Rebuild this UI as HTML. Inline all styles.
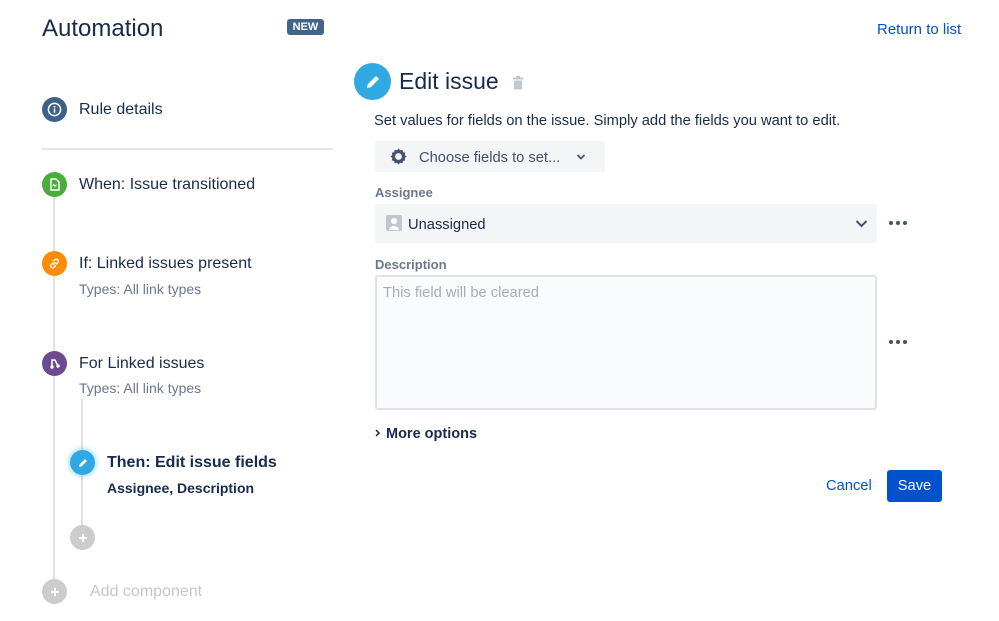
<!DOCTYPE html>
<html><head><meta charset="utf-8"><style>
*{margin:0;padding:0;box-sizing:border-box}
body{width:999px;height:621px;background:#fff;font-family:"Liberation Sans",Arial,sans-serif;color:#172B4D;position:relative;overflow:hidden}
.a{position:absolute;white-space:nowrap}
.c{position:absolute;border-radius:50%;display:flex;align-items:center;justify-content:center}
.vl{position:absolute;width:2px;background:#DFE1E6}
.g{color:#6B778C;font-size:14px}
.dots{position:absolute;display:flex;gap:3px}
.dots i{width:4px;height:4px;border-radius:50%;background:#42526E;display:block}
</style></head><body>
<div class="a" style="left:42px;top:15px;font-size:24px;">Automation</div>
<div class="a" style="left:287px;top:19px;width:37px;height:16px;background:#42648a;border-radius:3px;color:#fff;font-size:11px;font-weight:bold;text-align:center;line-height:16px">NEW</div>
<div class="a" style="left:877px;top:21px;font-size:15px;color:#0052CC">Return to list</div>

<div class="c" style="left:42px;top:97px;width:25px;height:25px;background:#3e6189"><svg width="15" height="15" viewBox="0 0 16 16"><circle cx="8" cy="8" r="6.5" fill="none" stroke="#fff" stroke-width="1.6"/><rect x="7.2" y="7" width="1.6" height="4.5" fill="#fff"/><circle cx="8" cy="5" r="1" fill="#fff"/></svg></div>
<div class="a" style="left:79px;top:101px;font-size:16px">Rule details</div>
<div class="a" style="left:42px;top:148px;width:291px;height:2px;background:#E4E6EA"></div>

<div class="vl" style="left:53px;top:196px;height:395px"></div>
<div class="c" style="left:42px;top:172px;width:25px;height:25px;background:#4bab3c"><svg width="12" height="13" viewBox="0 0 12 13"><path d="M2 1h5l3 3v8H2z" fill="none" stroke="#fff" stroke-width="1.4"/><path d="M3.5 8l1.5-1.5 1 2 1.5-2" fill="none" stroke="#fff" stroke-width="1"/></svg></div>
<div class="a" style="left:79px;top:176px;font-size:16px">When: Issue transitioned</div>

<div class="c" style="left:42px;top:251px;width:25px;height:25px;background:#ff8b00"><svg width="13" height="13" viewBox="0 0 14 14"><path d="M6 8l2-2M5 6.5L3.5 8a2 2 0 003 3L8 9.5M9 7.5L10.5 6a2 2 0 00-3-3L6 4.5" fill="none" stroke="#fff" stroke-width="1.5" stroke-linecap="round"/></svg></div>
<div class="a" style="left:79px;top:255px;font-size:16px">If: Linked issues present</div>
<div class="a g" style="left:79px;top:281px">Types: All link types</div>

<div class="c" style="left:42px;top:351px;width:25px;height:25px;background:#6b4a8f"><svg width="12" height="13" viewBox="0 0 12 13"><circle cx="3" cy="10" r="1.7" fill="#fff"/><circle cx="9" cy="9" r="1.7" fill="#fff"/><path d="M3 10V3h3l3 6" fill="none" stroke="#fff" stroke-width="1.5"/></svg></div>
<div class="a" style="left:79px;top:355px;font-size:16px">For Linked issues</div>
<div class="a g" style="left:79px;top:380px">Types: All link types</div>
<div class="vl" style="left:81px;top:399px;height:135px"></div>

<div class="c" style="left:70px;top:450px;width:25px;height:25px;background:#30a9e3;box-shadow:0 0 5px 2px rgba(48,169,227,.35)"><svg width="12" height="12" viewBox="0 0 12 12"><path d="M2 10l.5-2.5L8 2l2 2-5.5 5.5z" fill="#fff"/></svg></div>
<div class="a" style="left:107px;top:454px;font-size:16px;font-weight:bold">Then: Edit issue fields</div>
<div class="a" style="left:107px;top:480px;font-size:14px;font-weight:bold">Assignee, Description</div>

<div class="c" style="left:70px;top:525px;width:25px;height:25px;background:#ccc"><svg width="10" height="10"><path d="M5 1v8M1 5h8" stroke="#fff" stroke-width="2"/></svg></div>
<div class="c" style="left:42px;top:579px;width:25px;height:25px;background:#ccc"><svg width="10" height="10"><path d="M5 1v8M1 5h8" stroke="#fff" stroke-width="2"/></svg></div>
<div class="a" style="left:90px;top:583px;font-size:16px;color:#C1C7D0">Add component</div>

<div class="c" style="left:354px;top:63px;width:37px;height:37px;background:#30a9e3"><svg width="18" height="18" viewBox="0 0 12 12"><path d="M2 10l.5-2.5L8 2l2 2-5.5 5.5z" fill="#fff"/></svg></div>
<div class="a" style="left:399px;top:68px;font-size:23px;">Edit issue</div>
<svg class="a" style="left:512px;top:76px" width="12" height="14" viewBox="0 0 12 14"><rect x="1" y="1.5" width="10" height="2" fill="#c1c7d0"/><rect x="4" y="0" width="4" height="2" fill="#c1c7d0"/><rect x="2" y="4.5" width="8" height="9" rx="1" fill="#c1c7d0"/></svg>
<div class="a" style="left:374px;top:113px;font-size:14.7px">Set values for fields on the issue. Simply add the fields you want to edit.</div>

<div class="a" style="left:375px;top:141px;width:230px;height:31px;background:#F4F5F7;border-radius:3px"></div>
<svg class="a" style="left:389px;top:147px" width="19" height="19" viewBox="0 0 20 20"><path d="M10 1.5l1.6 2 2.5-.6.6 2.5 2.5.6-.6 2.5 2 1.5-2 1.6.6 2.5-2.5.6-.6 2.5-2.5-.6-1.6 2-1.5-2-2.5.6-.6-2.5-2.5-.6.6-2.5-2-1.6 2-1.5-.6-2.5 2.5-.6.6-2.5 2.5.6z" fill="#42526E"/><circle cx="10" cy="10" r="3.6" fill="#F4F5F7"/></svg>
<div class="a" style="left:419px;top:150px;font-size:14.7px;color:#42526E">Choose fields to set...</div>
<svg class="a" style="left:576px;top:153px" width="10" height="8"><path d="M1.5 2l3.5 3.5L8.5 2" fill="none" stroke="#42526E" stroke-width="1.8"/></svg>

<div class="a" style="left:375px;top:185px;font-size:13px;font-weight:bold;color:#6B778C">Assignee</div>
<div class="a" style="left:375px;top:204px;width:502px;height:39px;background:#F4F5F7;border-radius:3px"></div>
<div class="a" style="left:386px;top:215px;width:16px;height:16px;background:#c1c7d0;border-radius:2px"><svg width="16" height="16"><circle cx="8" cy="6" r="3" fill="#fff"/><path d="M3 15a5 4 0 0110 0z" fill="#fff"/></svg></div>
<div class="a" style="left:408px;top:217px;font-size:14.7px">Unassigned</div>
<svg class="a" style="left:855px;top:219px" width="13" height="9"><path d="M1.5 2l5 5 5-5" fill="none" stroke="#42526E" stroke-width="2"/></svg>
<div class="dots" style="left:889px;top:221px"><i></i><i></i><i></i></div>

<div class="a" style="left:375px;top:257px;font-size:13px;font-weight:bold;color:#6B778C">Description</div>
<div class="a" style="left:375px;top:275px;width:502px;height:135px;background:#FAFBFC;border:2px solid #DFE1E6;border-radius:3px"></div>
<div class="a" style="left:383px;top:285px;font-size:14.7px;color:#A5ADBA">This field will be cleared</div>
<div class="dots" style="left:889px;top:340px"><i></i><i></i><i></i></div>

<svg class="a" style="left:374px;top:428px" width="7" height="10"><path d="M2 2l3 3-3 3" fill="none" stroke="#172B4D" stroke-width="1.5"/></svg>
<div class="a" style="left:386px;top:426px;font-size:14.5px;font-weight:bold;color:#172B4D">More options</div>

<div class="a" style="left:826px;top:478px;font-size:14.7px;color:#0052CC">Cancel</div>
<div class="a" style="left:887px;top:470px;width:55px;height:32px;background:#0052CC;border-radius:3px;color:#fff;font-size:14.7px;text-align:center;line-height:32px">Save</div>
</body></html>
